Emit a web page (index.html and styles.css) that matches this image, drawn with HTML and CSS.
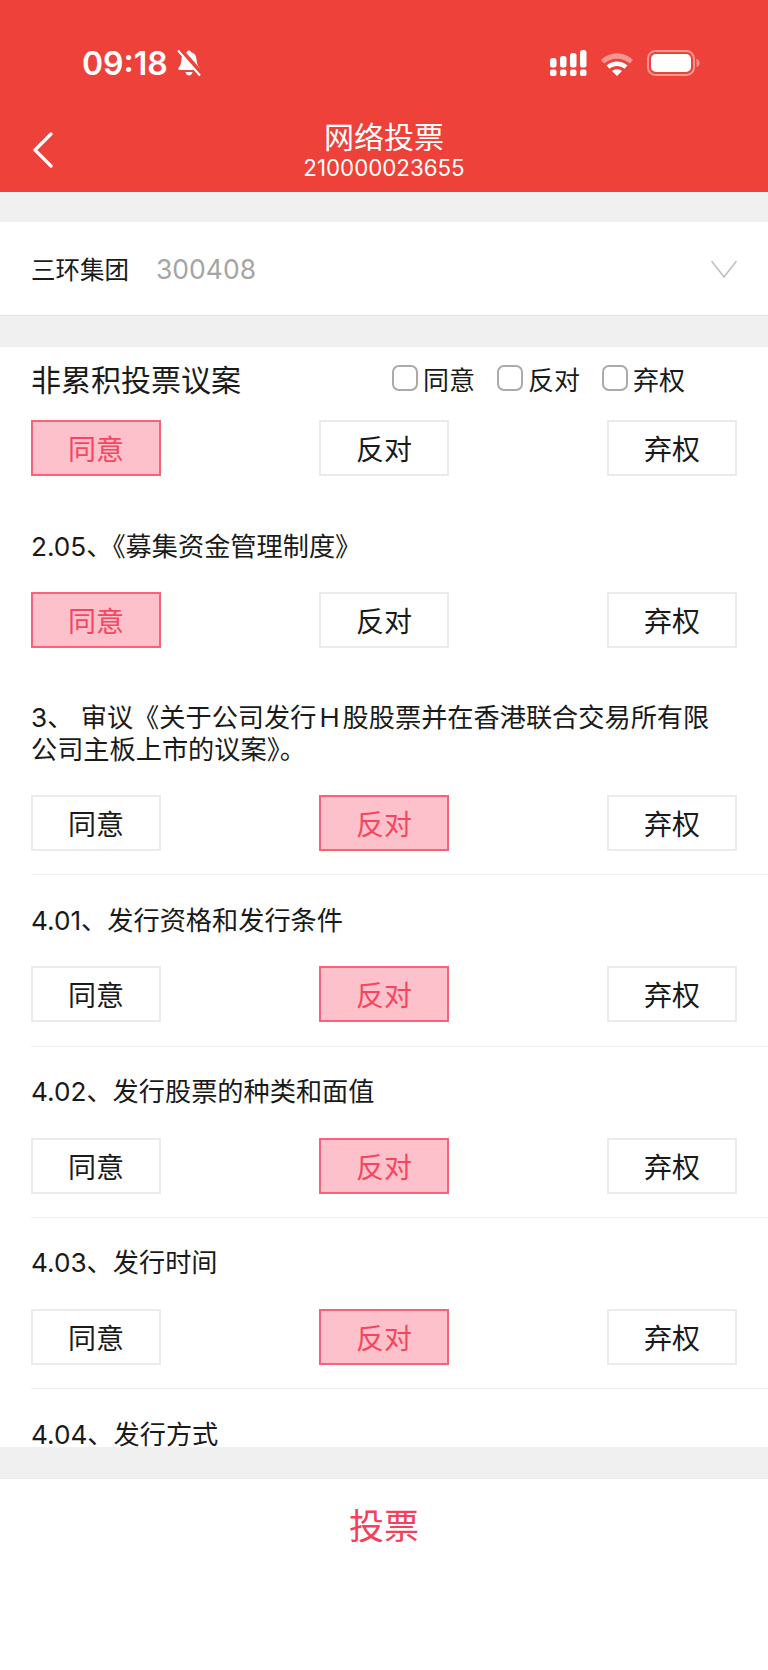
FILE: index.html
```html
<!DOCTYPE html>
<html lang="zh-CN">
<head>
<meta charset="UTF-8" />
<title>网络投票</title>
<link rel="stylesheet" href="styles.css">
</head>
<body>
<div class="app">

	<header class="top">
		<div class="status">
			<div class="status-left">
				<span class="time">09:18</span>
				<svg class="bell" width="26" height="28" viewBox="0 0 26 28">
					<path d="M13 1.500c1.300 0 2 .8 2.200 1.800 3.600 1 5.200 3.900 5.400 7.500.2 3.600 1 6 2.800 8 .8.9.3 2.200-1 2.200H3.600c-1.300 0-1.800-1.300-1-2.200 1.800-2 2.600-4.400 2.800-8 .2-3.600 1.800-6.500 5.400-7.500.2-1 .9-1.800 2.200-1.800z" fill="#fff"/>
					<path d="M9.500 23h7c-.3 2-1.700 3.500-3.500 3.500S9.800 25 9.500 23z" fill="#fff"/>
					<path d="M3.500 0 L26 25.500" stroke="#ee4139" stroke-width="5"/>
					<path d="M2 1.500 L24 26.500" stroke="#fff" stroke-width="2"/>
				</svg>
			</div>
			<div class="status-right">
				<svg width="37" height="26" viewBox="0 0 37 26" fill="#fff">
					<rect x="0" y="8" width="6.500" height="9.500" rx="2.500"/>
					<rect x="0" y="19.500" width="6.500" height="6.500" rx="2"/>
					<rect x="10" y="6" width="6.500" height="11.500" rx="2.500"/>
					<rect x="10" y="19.500" width="6.500" height="6.500" rx="2"/>
					<rect x="20" y="3" width="6.500" height="14.500" rx="2.500"/>
					<rect x="20" y="19.500" width="6.500" height="6.500" rx="2"/>
					<rect x="30" y="0" width="6.500" height="17.500" rx="2.500"/>
					<rect x="30" y="19.500" width="6.500" height="6.500" rx="2"/>
				</svg>
				<svg width="32" height="25" viewBox="0 0 32 25">
					<path d="M0 9C9 0 23 0 32 9l-3.200 3.600C21.500 6 10.500 6 3.200 12.600z" fill="#fff" fill-opacity=".45"/>
					<path d="M5.500 14.500C11.500 9 20.500 9 26.500 14.500l-3 3.300C18.800 14 13.200 14 8.500 17.800z" fill="#fff"/>
					<path d="M11 20c3-2.500 7-2.500 10 0l-5 5z" fill="#fff"/>
				</svg>
				<svg width="53" height="26" viewBox="0 0 53 26">
					<rect x="1" y="1" width="46" height="24" rx="7.500" fill="none" stroke="#fff" stroke-opacity=".45" stroke-width="2"/>
					<rect x="4" y="4" width="40" height="18" rx="5" fill="#fff"/>
					<path d="M49.500 9c2 .5 3 2.200 3 4s-1 3.500-3 4z" fill="#fff" fill-opacity=".45"/>
				</svg>
			</div>
		</div>
		<div class="nav">
			<svg class="back" width="22" height="36" viewBox="0 0 22 36">
				<path d="M19 2 L3 18 L19 34" fill="none" stroke="#fff" stroke-width="3.200" stroke-linecap="round" stroke-linejoin="round"/>
			</svg>
			<div class="nav-title">网络投票</div>
			<div class="nav-sub">210000023655</div>
		</div>
	</header>

	<div class="stock">
		<span class="stock-name">三环集团</span>
		<span class="stock-code">300408</span>
		<svg class="stock-arrow" width="26" height="18" viewBox="0 0 26 18">
			<path d="M.5 1 L13 17 L25.500 1" fill="none" stroke="#bdbdbd" stroke-width="1.500"/>
		</svg>
	</div>

	<main class="list">
		<div class="list-head">
			<h2>非累积投票议案</h2>
			<div class="all-checks">
				<span class="check"><i></i>同意</span>
				<span class="check"><i></i>反对</span>
				<span class="check"><i></i>弃权</span>
			</div>
		</div>

		<section class="item first">
			<div class="choices">
				<button class="on">同意</button><button>反对</button><button>弃权</button>
			</div>
		</section>

		<section class="item plain">
			<p>2.05、《募集资金管理制度》</p>
			<div class="choices">
				<button class="on">同意</button><button>反对</button><button>弃权</button>
			</div>
		</section>

		<section class="item">
			<p>3、 审议《关于公司发行Ｈ股股票并在香港联合交易所有限公司主板上市的议案》。</p>
			<div class="choices">
				<button>同意</button><button class="on">反对</button><button>弃权</button>
			</div>
		</section>

		<section class="item">
			<p>4.01、发行资格和发行条件</p>
			<div class="choices">
				<button>同意</button><button class="on">反对</button><button>弃权</button>
			</div>
		</section>

		<section class="item">
			<p>4.02、发行股票的种类和面值</p>
			<div class="choices">
				<button>同意</button><button class="on">反对</button><button>弃权</button>
			</div>
		</section>

		<section class="item">
			<p>4.03、发行时间</p>
			<div class="choices">
				<button>同意</button><button class="on">反对</button><button>弃权</button>
			</div>
		</section>

		<section class="item">
			<p>4.04、发行方式</p>
		</section>
	</main>

	<footer class="bottom">投票</footer>

</div>
</body>
</html>
```

FILE: styles.css
```css
*
{
	box-sizing: border-box;
}

body
{
	margin: 0;
	font-family: Inter, "Noto Sans CJK SC", sans-serif;
	color: #1a1a1a;
	background-color: #fff;
}

.app
{
	display: flex;
	flex-direction: column;
	height: 1670px;
	background-color: #f0f0f0;
}

/* red header */
.top
{
	height: 192px;
	flex: none;
	background-color: #ee4139;
	color: #fff;
}

.status
{
	display: flex;
	justify-content: space-between;
	align-items: center;
	height: 76px;
	padding: 50px 68px 0 82px;
}

.status-left, .status-right
{
	display: flex;
	align-items: center;
}

.status-right
{
	gap: 14px;
}

.time
{
	font-size: 32px;
	font-weight: 600;
}

.bell
{
	margin-left: 8px;
}

.nav
{
	position: relative;
	text-align: center;
	padding-top: 44px;
}

.back
{
	position: absolute;
	left: 32px;
	top: 56px;
}

.nav-title
{
	font-size: 30px;
	line-height: 34px;
}

.nav-sub
{
	margin-top: 2px;
	font-size: 22.300px;
	line-height: 24px;
}

/* stock selector */
.stock
{
	display: flex;
	align-items: center;
	flex: none;
	height: 94px;
	margin-top: 30px;
	padding: 0 31px;
	background-color: #fff;
	border-bottom: 1px solid #e2e2e2;
}

.stock-name
{
	font-size: 24.500px;
}

.stock-code
{
	margin-left: 27px;
	font-size: 26.500px;
	color: #a5a5a5;
}

.stock-arrow
{
	margin-left: auto;
}

/* proposals */
.list
{
	flex: 1;
	overflow: hidden;
	margin-top: 31px;
	padding-left: 31px;
	background-color: #fff;
}

.list-head
{
	display: flex;
	align-items: center;
	height: 62px;
}

.list-head h2
{
	margin: 0;
	font-size: 30px;
	font-weight: normal;
	width: 361px;
}

.all-checks
{
	display: flex;
	gap: 22px;
}

.check
{
	display: flex;
	align-items: center;
	gap: 5px;
	font-size: 26px;
}

.check i
{
	width: 26px;
	height: 26px;
	border: 2px solid #aaa;
	border-radius: 7px;
}

.item
{
	padding: 0 31px 23.300px 0;
	border-bottom: 1px solid #efefef;
}

.item p
{
	margin: 0;
	padding: 29.500px 10px 29.500px 0;
	font-size: 26.200px;
	line-height: 32px;
}

.item.first
{
	padding-top: 11px;
	padding-bottom: 25px;
	border-bottom: 0;
}

.item.plain
{
	padding-bottom: 24px;
	border-bottom: 0;
}

.choices
{
	display: flex;
	justify-content: space-between;
}

.choices button
{
	width: 130px;
	height: 56px;
	padding: 0;
	font-family: inherit;
	font-size: 28px;
	color: #1a1a1a;
	background-color: #fff;
	border: 2px solid #ebebeb;
}

.choices button.on
{
	color: #f8455f;
	background-color: #fcc1ca;
	border-color: #f8637a;
}

/* bottom action */
.bottom
{
	flex: none;
	height: 192px;
	margin-top: 31px;
	padding-top: 28px;
	font-size: 35px;
	line-height: 38px;
	text-align: center;
	color: #f5405a;
	background-color: #fff;
	border-top: 1px solid #ececec;
}
```
